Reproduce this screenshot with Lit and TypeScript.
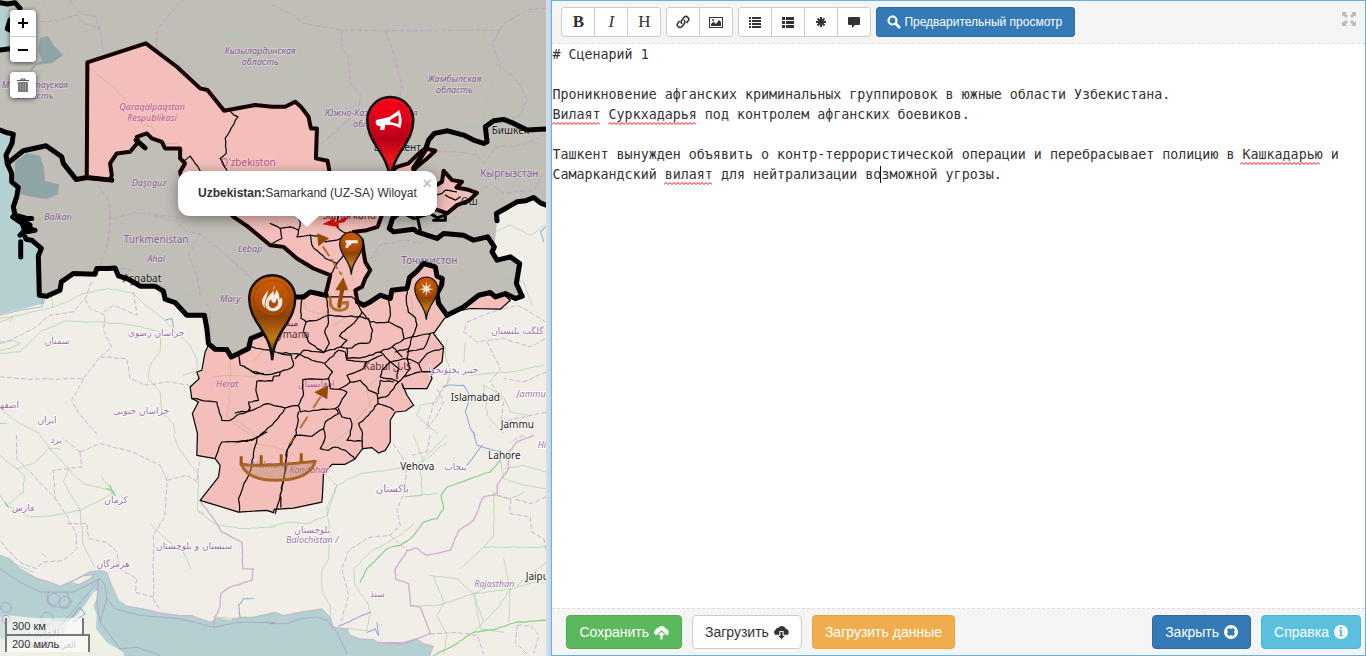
import { LitElement, html, svg, css } from "lit";
import { customElement, state } from "lit/decorators.js";

/* Map sheets: outlines are digitised at three units per pixel, each sheet with its own origin. */
const SHEETS: Record<string, [number, number]> = {
  a: [0, 0],
  b: [270, 0],
  c: [0, 215],
  d: [270, 215],
  e: [0, 435],
  f: [270, 435],
  g: [235, 340],
};

/* "a 10 20 30 40 b 5 6" -> list of strokes in map pixels; "/" or a line break lifts the pen. */
function strokes(source: string): [number, number][][] {
  let sheet = SHEETS.a;
  const all: [number, number][][] = [[]];
  const tokens = source.trim().replace(/\n/g, " / ").split(/[\s,]+/);
  for (let i = 0; i < tokens.length; i++) {
    const t = tokens[i];
    if (t === "/") all.push([]);
    else if (SHEETS[t]) sheet = SHEETS[t];
    else all[all.length - 1].push([sheet[0] + Number(t) / 3, sheet[1] + Number(tokens[++i]) / 3]);
  }
  return all.filter((s) => s.length > 1);
}

function trace(source: string, close = false): string {
  return strokes(source)
    .map((s) => "M" + s.map(([x, y]) => `${x.toFixed(1)} ${y.toFixed(1)}`).join("L") + (close ? "Z" : ""))
    .join("");
}

function meander(source: string, amount: number): string {
  let seed = 7;
  const noise = () => {
    seed = (seed * 16807) % 2147483647;
    return (seed / 2147483647 - 0.5) * 2 * amount;
  };
  return strokes(source)
    .map((s) => {
      let out = `M${s[0][0].toFixed(1)} ${s[0][1].toFixed(1)}`;
      for (let i = 1; i < s.length; i++) {
        const [x0, y0] = s[i - 1];
        const [x1, y1] = s[i];
        const steps = Math.max(1, Math.round(Math.hypot(x1 - x0, y1 - y0) / 4));
        for (let k = 1; k < steps; k++) {
          const x = x0 + ((x1 - x0) * k) / steps + noise();
          const y = y0 + ((y1 - y0) * k) / steps + noise();
          out += `L${x.toFixed(1)} ${y.toFixed(1)}`;
        }
        out += `L${x1.toFixed(1)} ${y1.toFixed(1)}`;
      }
      return out;
    })
    .join("");
}

const TURKMEN_SOUTH =
  "c 38 5 60 20 100 45 70 52 78 72 95 75 124 100 115 122 118 240 140 243 180 225 184 200 220 175 285 177 290 160 325 160 345 158 355 182 385 192 420 213 465 213 490 228 495 252 525 262 560 300 613 300 620 340 625 385 645 402 680 403 693 425 715 415 745 400 752 370 795 352 d 40 270 75 245 100 245 120 230 155 238 168 240";
const AMU_NORTH =
  "262 260 280 270 300 260 330 240 360 250 365 225 410 220 418 187 440 168 460 145 495 155 500 183 516 190 514 210 500 235 505 265 530 300 580 275 625 240 660 232 675 245 705 235 735 250 755 243";
const TAJIK_EAST =
  "755 243 738 205 748 145 720 125 680 135 665 110 672 95 652 65 610 75 580 60 520 55 500 70 440 50 430 42 370 50 357 40 367 10 385 -5";
const CASPIAN =
  "a 0 390 22 398 40 402 36 430 18 465 22 490 35 520 35 545 55 562 50 590 40 620 45 645 80 655 95 655 / c 62 80 62 125 / 60 5 75 50 105 45 / 45 0 90 30 60 60";
const KAZAKH_SOUTH =
  "b 430 505 465 450 475 420 492 400 532 392 580 405 610 420 640 430 650 425 645 380 670 362 700 358 730 370 770 390 828 387";
const CHINA_WEST = "b 840 620 810 608 790 592 765 602 740 605 705 625 678 640 680 662";

const UZBEK_EAST = "d 335 0 322 35 290 45 250 50 275 75 280 110 285 140 300 165 285 190 275 215 255 225 262 260";
const UZBEK_WEST =
  "d 165 240 172 215 180 180 130 160 80 130 40 95 0 90 c 740 32 700 5 a 690 640 545 540 540 515 555 490 540 475 540 445 495 445 485 425 455 415 440 400 410 410 415 425 390 455 350 460 330 490 335 525 330 540 260 532";
const UZBEK_NORTH =
  "a 260 532 262 187 437 130 530 200 600 265 622 270 672 332 765 315 815 320 b 45 320 75 305 92 320 115 350 122 385 140 385 137 475 172 482 178 515";
const UZBEK = `${UZBEK_NORTH} 360 515 380 500 415 490 440 465 465 445 495 455 470 475 440 500 430 530 400 640 ${UZBEK_EAST} 165 240 ${UZBEK_WEST}`;
const TASHKENT = "b 365 512 380 500 415 490 440 465 465 445 495 452 470 475 440 500 430 512";
const FERGHANA =
  "b 490 560 515 545 520 512 532 525 545 540 575 545 558 562 590 568 620 578 595 602 560 615 530 640 510 632 485 625";
const AFGHAN =
  "c 625 390 615 410 605 465 590 470 597 490 570 515 575 550 595 560 577 595 592 655 e 590 60 645 70 660 90 655 125 600 195 715 230 800 225 820 232 f 12 222 70 218 155 200 157 175 g 265 400 290 372 330 372 358 357 382 325 410 322 430 338 450 330 465 305 465 240 480 215 510 212 535 195 515 165 500 130 d 400 520 470 520 485 490 480 470 515 440 520 395 490 355 522 310 560 288 600 280 690 282 720 255 700 238 675 245 660 232 625 240 580 275 530 300 505 265 500 235 514 210 516 190 500 183 495 155 460 145 440 168 418 187 410 220 365 225 360 250 330 240 300 260 280 270 262 260 245 245 168 245 155 235 120 230 100 245 75 245 40 270 c 795 352 752 370 745 400 715 415 693 425 680 403 645 402";

const PROVINCES = meander(
  `a 692 335 713 350 675 415 678 460 660 475 680 510 / 545 485 570 468 600 512
 b 490 590 515 580 525 570 558 575 / 525 585 555 600 570 590
 d 0 90 35 70 30 40 0 25 / 30 40 60 35 85 45 80 65 120 60 155 65 165 80 200 75 240 50 / 80 0 90 20 85 45 / 120 60 125 90 165 130 200 145 180 180 / 200 145 220 120 240 95
 d 205 0 200 35 230 55 / 95 240 92 310 108 320 100 350 115 380 160 412 100 405 75 430
 d 168 245 175 320 163 350 177 385 160 412 / 108 320 140 315 175 300 205 302 265 305 275 290 262 262
 d 265 305 295 310 307 345 298 382 265 385 245 398 212 395 230 375 208 362 230 340 250 325 265 305
 d 275 290 300 320 330 322 355 320 360 290 355 250 / 355 320 395 340 400 372 425 365
 d 410 220 408 255 414 290 436 308 440 330 425 365 450 360 490 352 / 230 400 230 430 285 425 330 410 365 395 400 372 / 160 412 212 395
 d 425 365 415 400 410 430 360 440 330 410 / 365 395 395 425 / 410 410 460 400 480 355 / 445 445 470 415 518 398 / 410 430 445 445 455 470 480 470
 d 410 430 420 460 400 485 385 500 360 490 330 485 335 465 360 440 / 400 485 450 470
 d 360 440 385 460 380 490 / 415 400 375 410 / 90 415 75 430
 g 12 50 15 75 60 100 100 103 135 95 170 82 175 75 168 45 130 38 50 20
 g 0 218 45 212 40 185 70 180 62 150 65 122 112 122 115 108 133 106 135 95
 g 45 212 95 190 150 203 190 195 205 165 203 118 280 115 285 145 310 147 335 155 315 190 300 205 235 210 195 215 190 195
 g 130 38 185 40 230 60 268 70 292 95 280 115 / 268 70 310 30 330 35 335 60 395 65
 g 150 203 110 255 70 290 50 300 0 305 / 190 215 185 260 180 290 155 330 150 380 140 450 120 520
 g 185 285 230 288 265 265 270 245 310 220 300 205
 g 265 265 270 290 255 325 280 330 300 320 330 330 355 350 358 357
 g 310 205 320 230 345 235 350 250 345 285 335 300 380 302
 g 310 147 345 125 375 120 400 150 425 160 428 190 400 225 370 250 382 280 382 325
 g 428 190 460 200 475 210 / 428 175 460 165 490 125 / 345 125 335 105 385 85 395 65 440 45 / 430 160 435 120 475 125
 c 715 420 720 450 760 470 790 475 / 575 550 650 560 665 615 690 615 710 600 740 590 750 575
 e 645 70 665 20 740 18 770 5 800 -10 / 770 10 755 90 715 190 718 228
 f 75 0 50 50 45 110 30 180 32 215`,
  0.7,
);

const ROADS_GREEN = meander(
  `a 128 0 150 55 180 110 205 155 260 195 370 290 390 320 450 380 490 430 550 460 / 205 155 200 180 120 230 60 250 0 280
 a 640 0 645 0 665 40 685 105 740 110 795 115 815 140
 b 0 180 50 205 110 210 160 240 210 270 250 325 / 745 0 680 35 650 75 640 115 655 160 680 190 700 230 770 255 828 280 / 680 190 665 240 650 290 645 330 630 380 520 385 440 415 / 828 345 760 350 650 380 / 828 400 780 430 720 440 690 420 650 450 600 480 560 520 555 545 / 700 440 740 490 800 510 828 540
 c 110 0 135 30 170 75 220 70 300 105 370 155 400 175 480 220 520 245 570 238 610 250 640 230 690 215 720 180 750 130 780 70 825 20
 c 0 310 60 300 120 285 160 275 200 260 250 235 325 220 400 235 430 265 490 310 520 345 570 390 590 430 590 465 550 480 / 0 415 60 410 120 350 195 318 300 320 400 330 480 350 480 410 450 450 445 490 480 530 485 590 520 625 525 655 / 0 320 40 305 30 320 / 0 385 40 375 60 385 30 400 0 405 / 0 580 60 625 120 655 / 155 235 158 275 / 0 625 20 625
 d 585 380 580 440 / 525 420 540 470 530 510 / 530 370 525 420 / 600 480 720 470 820 450 / 670 120 700 190 760 200 785 270 / 650 60 720 30 780 60 825 30 / 640 510 650 600 700 655 / 520 510 500 560 450 570 440 600 500 655 / 640 510 700 545 720 590 770 600
 e 120 0 148 38 205 100 250 145 330 165 345 180 / 148 38 100 85 50 100 0 60 / 50 100 72 120 70 170 20 210 0 180 / 20 210 90 245 160 240 240 225 320 185 345 165 / 148 38 180 42 / 205 100 190 140 240 225 250 330 285 395 / 305 125 335 165 / 520 0 540 45 595 120 592 225 650 270 735 280 825 275 / 592 225 610 235 / 450 265 490 305 550 350 570 400 / 125 355 140 365 / 30 380 100 410 / 640 545 720 548 825 540
 f 0 275 50 260 110 265 170 240 200 150 270 115 350 105 450 85 530 20 / 165 115 200 150 170 215 180 300 175 370 155 405 155 470 180 510 180 560 / 530 0 450 80 455 180 405 185 500 175 / 430 265 390 300 300 350 250 400 255 450 290 500 300 530 290 585 230 580 / 480 420 560 430 610 475 720 460 828 430 / 570 400 640 335 828 335 / 670 170 670 300 640 335 / 690 75 700 130 760 150 828 160 / 700 100 760 90 828 110 / 720 460 680 520 610 590 / 420 512 500 510 610 475 640 560 / 700 370 720 460 715 560 / 610 475 630 580 700 590 / 490 425 520 500 500 540 530 600 520 655 / 828 380 780 420 740 450 / 650 455 610 475 / 670 180 720 190 760 170 / 430 0 460 80`,
  0.5,
);
const ROADS_STRONG = meander(
  `f 490 660 550 630 610 590 680 580 740 560 828 555 / 690 75 660 110 600 130 530 155 512 180 520 220 500 250 460 260 430 300 390 330 350 340 290 400 270 440
 e 330 150 345 180 335 165 320 160 / 15 200 25 215`,
  0.6,
);
const PROVINCIAL = meander(
  `a 210 0 240 40 285 50 300 90 310 155 / 120 65 180 60 230 45 250 70 300 85 / 470 145 470 90 510 40 550 0 / 520 180 570 215 612 255 / 295 555 325 600 335 655 / 340 655 400 638 460 640 540 655
 b 5 15 60 40 100 70 215 90 340 92 480 92 690 90 / 215 90 215 150 235 165 240 250 270 285 265 330 200 390 150 435 / 345 92 370 160 395 260 385 300 / 828 25 770 30 700 70 665 130 690 200 740 240 770 300 750 345 700 370 / 500 455 560 455 620 465 640 490 680 440 760 435 828 400 / 820 520 790 570 700 580 660 550 620 580 600 560
 c 330 0 325 80 300 150 / 275 200 255 250 220 290 150 300 100 340 30 375 0 380 / 300 150 400 165 / 460 0 530 20 560 50 600 55 700 140 760 195 825 230 / 600 55 565 120 590 180 600 240 630 280 630 360 / 0 485 80 492 250 490 300 425 335 395 310 345 315 300 270 280 255 250 / 250 490 215 555 240 600 290 655 / 300 425 380 430 390 490 440 510 500 500 570 510 / 310 290 340 270 410 300 400 230
 d 300 130 330 90 400 75 450 85 520 30 560 0 / 700 280 740 270 770 285 825 320 / 700 280 640 300 590 320 580 350 620 380 700 370 780 395 828 370 / 650 380 690 460 660 500 700 560 690 620 828 590 / 828 470 760 500 700 490 / 540 490 490 560 470 640 500 600 520 560 500 520
 e 50 0 50 70 100 120 165 190 200 240 230 300 230 340 190 375 130 380 110 400 60 380 20 340 0 315 / 240 50 300 25 400 50 480 90 500 135 495 240 460 300 460 360 460 490 480 525 / 200 265 260 265 265 310 320 320 350 350 360 400 410 430 405 470 460 485 / 500 135 560 120 590 140 600 70 / 240 50 245 95 160 105 165 190 / 240 50 190 10
 f 370 25 410 90 400 180 380 220 390 270 360 300 300 305 235 345 215 400 235 480 210 570 / 360 300 410 345 / 480 0 470 50 420 60 / 680 180 720 190 720 235 780 245 785 290 820 310 828 350 / 480 595 560 590 620 600 640 655 / 760 0 720 20 / 828 185 780 205 730 190 / 740 570 735 620 770 655 / 740 570 780 570 805 600 790 655`,
  0.4,
);
const NATIONAL = meander(
  `e 600 195 640 250 665 290 725 320 728 400 760 400 755 435 690 455 662 475 660 510 645 545 640 575
 f 790 0 740 20 715 50 715 100 680 150 680 175 640 185 610 255 565 285 540 345 470 360 440 338 410 345 375 400 375 430 415 445 420 510 450 515 480 595 440 610 400 625 325 620`,
  0.5,
);
const MARITIME = trace(`e 0 400 60 440 120 470 220 470 300 430 315 450 320 490 345 520 420 540 540 550 640 575 720 560 825 562 f 0 565 50 565 90 550 140 545 170 555 200 590 230 655
 e 300 430 250 490 190 560 160 590 / 145 470 140 500 160 515 200 515 210 495 200 470 / 295 440 290 500 300 560 360 640 / 320 490 300 560 / 360 640 410 635 480 660
 c 128 240 125 275 60 285 0 300`);
const RIVERS = meander(
  `f 610 -10 620 30 690 50 / 635 30 590 90 / 205 572 300 530 / 290 590 315 580 325 600 320 560
 d 520 515 530 510 580 510 600 545 585 590 600 640 615 660 / 825 35 810 50 820 80
 c 495 315 515 310 520 335
 e 215 545 240 515 255 535 220 560 / 760 488 730 490 715 510 720 545`,
  0.4,
);
const PINK_ROADS = meander(
  `a 260 195 370 290 390 320 / 430 375 455 380 490 430 530 430 560 465
 c 640 485 690 480 760 485 825 460 / 690 440 690 540 680 600 720 640 750 655 / 760 440 790 400
 d 100 260 110 285 150 295 200 285 / 190 330 220 310 / 300 570 290 520 340 470 / 420 240 430 300 / 240 160 250 190 220 230
 g 0 240 50 270 60 310 120 320 180 345 / 260 330 330 280 400 200 430 140`,
  0.5,
);

const COAST_SOUTH = trace(
  `e 0 360 30 370 60 400 110 428 150 440 180 452 220 435 270 408 300 405 320 410 335 450 355 495 380 512 430 520 480 532 540 540 575 540 630 560 650 548 690 555 720 545 760 545 825 530 f 40 540 90 530 155 520 180 545 190 575 230 580 240 600 270 610 310 612 330 625 400 620 440 610 460 625 490 632 480 655 480 700 e -10 700`,
  true,
);
const GULF_LAND = trace(
  `e 0 545 30 540 80 545 130 550 200 560 230 540 260 500 280 470 292 465 290 490 280 510 290 540 288 580 320 620 370 650 380 700 -10 700`,
  true,
);
const GULF_WATER = trace(`e 0 545 130 550 200 560 190 600 150 610 60 615 0 610`, true);
const QESHM = trace(`e 212 440 250 422 280 418 270 430 235 448`, true);

const GREY_LAND = trace(
  `a 0 0 1638 0 1638 366 b 840 620 810 608 790 592 765 602 740 605 705 625 678 640 680 662 d 672 95 665 110 680 135 720 125 748 145 738 205 755 243 735 250 705 235 675 245 530 300 460 300 262 262 168 240 40 270 c 795 352 745 400 715 415 693 425 645 402 625 385 613 300 560 300 525 262 495 252 465 213 420 213 355 182 345 158 290 160 285 177 220 175 184 200 180 225 140 243 118 240 115 122 124 100 60 20 a 45 645 40 620 55 562 35 520 22 490 18 465 36 430 40 402 0 390`,
  true,
);

interface Label {
  x: number;
  y: number;
  text: string;
  kind: string;
}

const LABELS: Label[] = [
  { x: 260, y: 54, text: "Кызылординская", kind: "region" },
  { x: 260, y: 65, text: "область", kind: "region" },
  { x: 454, y: 82, text: "Жамбылская", kind: "region" },
  { x: 454, y: 93, text: "область", kind: "region" },
  { x: 371, y: 116, text: "Южно-Казахстанская", kind: "region" },
  { x: 371, y: 127, text: "область", kind: "region" },
  { x: 35, y: 88, text: "Мангистауская", kind: "region" },
  { x: 35, y: 99, text: "область", kind: "region" },
  { x: 152, y: 110, text: "Qaraqalpaqstan", kind: "region pinked" },
  { x: 152, y: 121, text: "Respublikasi", kind: "region pinked" },
  { x: 248, y: 166, text: "O'zbekiston", kind: "country pinked" },
  { x: 149, y: 186, text: "Daşoguz", kind: "region" },
  { x: 58, y: 220, text: "Balkan", kind: "region" },
  { x: 156, y: 243, text: "Türkmenistan", kind: "country" },
  { x: 156, y: 262, text: "Ahal", kind: "region" },
  { x: 250, y: 252, text: "Lebap", kind: "region" },
  { x: 230, y: 302, text: "Mary", kind: "region" },
  { x: 509, y: 177, text: "Кыргызстан", kind: "country" },
  { x: 429, y: 264, text: "Точикистон", kind: "country" },
  { x: 227, y: 387, text: "Herat", kind: "region pinked" },
  { x: 270, y: 468, text: "Helmand", kind: "region pinked" },
  { x: 309, y: 473, text: "Kandahar", kind: "region pinked" },
  { x: 316, y: 387, text: "افغانستان", kind: "arabic pinked" },
  { x: 156, y: 336, text: "خراسان رضوی", kind: "arabic" },
  { x: 57, y: 344, text: "سمنان", kind: "arabic" },
  { x: 141, y: 414, text: "خراسان جنوبی", kind: "arabic" },
  { x: 47, y: 423, text: "ایران", kind: "arabic" },
  { x: 5, y: 408, text: "اصفهان", kind: "arabic" },
  { x: 56, y: 443, text: "یزد", kind: "arabic" },
  { x: 116, y: 503, text: "کرمان", kind: "arabic" },
  { x: 23, y: 511, text: "فارس", kind: "arabic" },
  { x: 194, y: 549, text: "سیستان و بلوچستان", kind: "arabic" },
  { x: 113, y: 567, text: "هرمزگان", kind: "arabic" },
  { x: 44, y: 635, text: "الإمارات", kind: "arabic" },
  { x: 48, y: 648, text: "العربية المتحدة", kind: "arabic" },
  { x: 517, y: 334, text: "گلگت بلتستان", kind: "arabic" },
  { x: 453, y: 373, text: "خیبر پختونخوا", kind: "arabic" },
  { x: 455, y: 470, text: "پنجاب", kind: "arabic" },
  { x: 392, y: 492, text: "پاکستان", kind: "country arabic" },
  { x: 312, y: 533, text: "بلوچستان", kind: "arabic" },
  { x: 312, y: 543, text: "Balochistan /", kind: "region" },
  { x: 377, y: 597, text: "سنڌ", kind: "arabic" },
  { x: 494, y: 587, text: "Rajasthan", kind: "region" },
  { x: 531, y: 397, text: "Jammu", kind: "region" },
  { x: 550, y: 448, text: "Himac", kind: "region" },
  { x: 510, y: 134, text: "Бишкек", kind: "city" },
  { x: 397, y: 151, text: "Шымкент", kind: "city" },
  { x: 469, y: 205, text: "Ош", kind: "city" },
  { x: 142, y: 282, text: "Aşgabat", kind: "city" },
  { x: 286, y: 338, text: "Maymana", kind: "city pale" },
  { x: 288, y: 326, text: "میمنه", kind: "arabic pale" },
  { x: 387, y: 370, text: "Kabul کابل", kind: "city pale" },
  { x: 475, y: 401, text: "Islamabad", kind: "city" },
  { x: 517, y: 428, text: "Jammu", kind: "city" },
  { x: 504, y: 459, text: "Lahore", kind: "city" },
  { x: 417, y: 470, text: "Vehova", kind: "city" },
  { x: 539, y: 580, text: "Jaipur", kind: "city" },
  { x: 349, y: 219, text: "Samarkand", kind: "city pale" },
];

const PIN = "M0 63C-2 32-23 26-23 1A23 23 0 1 1 23 1C23 26 2 32 0 63Z";

const GLYPHS = {
  horn: svg`<path d="M-14 1Q-16 5-12 7L-10 7-10 11-6 11-5 6 2 6Q6 7 10 9Q13 1 9-9Q5-6-1-2ZM0 1Q5-2 8-4 9 2 8 5 4 4 0 3Z" fill="#fff" fill-rule="evenodd"/>`,
  fire: svg`<path d="M2-12C4-6-4-3-6 3-9 10-4 14 1 14 8 14 11 8 10 2 9 0 8 1 7 3 8-2 6-5 4-8 4-4 2-4 2-1 1-7 1-8 2-12ZM0 11C-5 9-4 4-1 2-1 4 0 5 2 6 4 5 4 2 5 1 7 6 6 10 0 11Z" fill="#f0e9e4" fill-rule="evenodd"/><path d="M-4-7C-8-2-11 2-10 6-9 9-8 10-7 11-9 5-5 1-4-7Z" fill="#f0e9e4"/>`,
  gun: svg`<path d="M-12-4L-10-6H13V0H1L-1 4H-4L-6 9H-12L-9-1-12-2Z" fill="#f5eee9"/>`,
  leaf: svg`<path d="M0-14L2-3 10-10 5 0 15 2 5 4 8 10 1 6V14H-1V6L-8 10-5 4-15 2-5 0-10-10-2-3Z" fill="#f0e2d5"/>`,
};

const MAP_PINS = [
  { x: 272, y: 297, size: 1, tone: "orange", glyph: GLYPHS.fire },
  { x: 390, y: 119, size: 1, tone: "red", glyph: GLYPHS.horn },
  { x: 351, y: 243, size: 0.5, tone: "orange", glyph: GLYPHS.gun },
  { x: 426, y: 288, size: 0.5, tone: "orange", glyph: GLYPHS.leaf },
];

@customElement("scenario-map")
class ScenarioMap extends LitElement {
  @state() private popupOpen = true;

  static styles = css`
    :host {
      display: block;
      position: relative;
      overflow: hidden;
      background: #f1eee8;
      font-family: "Liberation Sans", Arial, sans-serif;
    }
    .chart {
      display: block;
      width: 100%;
      height: 100%;
    }
    .line {
      fill: none;
      stroke-linejoin: round;
      stroke-linecap: round;
    }
    .dash {
      stroke-linecap: butt;
      stroke-dasharray: 5 2;
    }
    .label {
      text-anchor: middle;
      paint-order: stroke;
      stroke: rgba(255, 255, 255, 0.8);
      stroke-width: 2px;
      stroke-linejoin: round;
      font-family: "Noto Sans", "DejaVu Sans", sans-serif;
      font-size: 9px;
      fill: #a070a4;
    }
    .under {
      stroke: rgba(222, 214, 222, 0.6);
      fill: #84648c;
    }
    .region {
      font-style: italic;
    }
    .country {
      font-size: 10px;
    }
    .arabic {
      font-family: "DejaVu Sans", sans-serif;
    }
    .pinked {
      fill: #b5588a;
      stroke: rgba(250, 205, 205, 0.8);
    }
    .city {
      font-size: 10px;
      fill: #222;
    }
    .north {
      stroke: rgba(205, 202, 198, 0.8);
    }
    .pale {
      fill: #5a2c34;
      stroke: none;
    }
    .controls {
      position: absolute;
      left: 10px;
      top: 10px;
      display: grid;
      gap: 10px;
    }
    .bar {
      display: grid;
      border-radius: 4px;
      box-shadow: 0 1px 5px rgba(0, 0, 0, 0.65);
      overflow: hidden;
    }
    .bar button {
      display: grid;
      place-items: center;
      width: 26px;
      height: 26px;
      padding: 0;
      border: 0;
      background: #fff;
      color: #000;
      cursor: pointer;
    }
    .bar button + button {
      border-top: 1px solid #ccc;
    }
    .scale {
      position: absolute;
      left: 5px;
      bottom: 4px;
      display: grid;
      justify-items: start;
      font-size: 11px;
      line-height: 16px;
      color: #333;
    }
    .rule {
      box-sizing: border-box;
      padding: 0 5px;
      border: 2px solid #777;
      background: rgba(255, 255, 255, 0.5);
    }
    .km {
      width: 79px;
      border-top: 0;
    }
    .miles {
      width: 85px;
      margin-top: -2px;
      border-bottom: 0;
    }
    .popup {
      position: absolute;
      left: 178px;
      top: 171px;
      display: flex;
      padding: 0 20px;
      border-radius: 12px;
      background: #fff;
      box-shadow: 0 3px 14px rgba(0, 0, 0, 0.4);
      font-size: 12px;
      line-height: 45px;
      color: #333;
      white-space: nowrap;
    }
    .popup::after {
      content: "";
      position: absolute;
      left: 50%;
      top: 100%;
      margin-left: -12px;
      border: 12px solid transparent;
      border-top: 11px solid #fff;
      border-bottom: 0;
    }
    .close {
      position: absolute;
      right: 5px;
      top: 4px;
      padding: 0;
      border: 0;
      background: none;
      font: bold 16px/18px "Liberation Sans", Arial, sans-serif;
      color: #c3c3c3;
      cursor: pointer;
    }
  `;

  private pin(p: (typeof MAP_PINS)[number]) {
    return svg`<g transform="translate(${p.x} ${p.y}) scale(${p.size})">
      <path d=${PIN} fill="url(#${p.tone})" stroke="#111" stroke-width="2.500"></path>
      <circle r="18" cy="1" fill="url(#${p.tone}-cap)" stroke="#000" stroke-opacity=".15"></circle>
      ${p.glyph}
    </g>`;
  }

  render() {
    return html`
      <svg class="chart" viewBox="0 0 546 656" preserveAspectRatio="xMinYMin slice" role="img" aria-label="Карта">
        <defs>
          <linearGradient id="orange" x2="0" y2="1">
            <stop offset="0" stop-color="#d65c00" /><stop offset=".5" stop-color="#8f4206" />
            <stop offset=".75" stop-color="#c47a12" /><stop offset="1" stop-color="#1c0e00" />
          </linearGradient>
          <linearGradient id="orange-cap" x2="0" y2="1">
            <stop offset="0" stop-color="#c85a06" /><stop offset="1" stop-color="#a44806" />
          </linearGradient>
          <linearGradient id="red" x2="0" y2="1">
            <stop offset="0" stop-color="#ff0a1c" /><stop offset=".5" stop-color="#b80018" />
            <stop offset=".75" stop-color="#f01818" /><stop offset="1" stop-color="#a00010" />
          </linearGradient>
          <linearGradient id="red-cap" x2="0" y2="1">
            <stop offset="0" stop-color="#f80018" /><stop offset="1" stop-color="#c4001c" />
          </linearGradient>
        </defs>
        <rect width="546" height="656" fill="#f1eee8" />
        <path d="M0 0H45V303L0 314Z" fill="#b5d0d0" />
        <path d=${COAST_SOUTH} fill="#b5d0d0" />
        <path d=${GULF_LAND} fill="#eef0e6" />
        <path d=${GULF_WATER} fill="#b5d0d0" opacity=".5" />
        <path d=${QESHM} fill="#f1eee8" stroke="#b99fc9" stroke-width=".6" />
        <path d=${GREY_LAND} fill="#c1bdb7" />
        <path d="M0 6Q10 4 10 20V48L0 50Z" fill="#b5d0d0" />
        <path d="M30 72Q32 64 42 61L38 50 40 38 48 36 54 46 63 55 52 63 36 65Z" fill="#8fa5a5" />
        <path d="M15 162L27 153 40 156 44 168 45 181 59 184 58 194 46 199 29 196 18 193 15 180Z" fill="#8fa5a5" />
        <path class="line" d=${COAST_SOUTH} stroke="#b99fc9" stroke-width=".6" />
        <g class="line" stroke="#a890c4" stroke-width=".8" opacity=".8">
          <path d=${MARITIME} />
          <circle cx="6" cy="607" r="5" /><circle cx="47" cy="618" r="6" /><circle cx="54" cy="599" r="6" />
          <circle cx="65" cy="602" r="6" /><circle cx="6" cy="619" r="4" />
        </g>
        <path class="line" d=${RIVERS} stroke="#8fa9d2" stroke-width="1" />
        <path class="line dash" d=${PROVINCIAL} stroke="#c08fc6" stroke-width=".9" opacity=".7" />
        <path class="line" d=${NATIONAL} stroke="#cf9fd0" stroke-width="1.4" opacity=".8" />
        <path class="line" d=${ROADS_GREEN} stroke="#9fd09c" stroke-width=".8" opacity=".8" />
        <path class="line" d=${ROADS_STRONG} stroke="#86d18a" stroke-width="1.2" />

        <path d=${trace(UZBEK, true)} fill="#f4bfbb" />
        <path d=${trace(FERGHANA, true)} fill="#f4bfbb" />
        <path d=${trace(AFGHAN, true)} fill="#f4bfbb" stroke="#000" stroke-width="1.2" stroke-linejoin="round" />
        <path class="line" d=${PINK_ROADS} stroke="#c9b48f" stroke-width=".9" opacity=".8" />

        ${LABELS.map((l) => {
          const north = l.y < 310 && !/pinked|pale/.test(l.kind);
          const tone = north ? (l.kind === "city" ? " north" : " under") : "";
          return svg`<text class="label ${l.kind}${tone}" x=${l.x} y=${l.y}>${l.text}</text>`;
        })}

        <path class="line" d=${PROVINCES} stroke="#000" stroke-width="1.2" />
        <g class="line" stroke="#000" stroke-width="5">
          <path d=${trace(TURKMEN_SOUTH)} />
          <path d=${trace("d " + AMU_NORTH)} />
          <path d=${trace("d " + TAJIK_EAST)} />
          <path d=${trace(CASPIAN)} />
          <path d=${trace("a 22 490 70 452 138 437 185 470 190 490 228 538 260 532 335 540 / 408 420 435 443")} />
          <path d=${trace("a 0 150 30 146 / 30 60 22 86 30 90 / 0 8 22 12 45 8 60 25")} />
          <path d=${trace(KAZAKH_SOUTH)} />
          <path d=${trace(CHINA_WEST)} />
          <path d=${trace("d 400 -5 430 10 480 -5 500 8 525 0 525 15 490 15 / 440 0 450 45")} stroke-width="3" />
        </g>
        <g class="line" stroke="#150000" stroke-width="4">
          <path d=${trace(UZBEK_NORTH)} />
          <path d=${trace(UZBEK_WEST)} />
          <path d=${trace(UZBEK_EAST)} />
          <path d=${trace(TASHKENT)} />
          <path d=${trace(FERGHANA)} />
        </g>

        <path d="M322 224L336 217 334 222 350 215 344 222 338 223 339 227Z" fill="#e80c0c" />
        <g fill="#964a00">
          <path d="M317 233L329 238 318 246Z" />
          <path d="M343 277L335 290 348 290Z" />
          <path d="M314 392L328 385 327 399Z" />
        </g>
        <g class="line" stroke="#a3601c" stroke-width="2" stroke-linecap="butt">
          <path d="M323 247L341 274" stroke-dasharray="10 5" opacity=".8" />
          <path d="M320 397L290 443" stroke-dasharray="12 12" opacity=".8" />
          <path d="M342 289L339 306" stroke-width="4" stroke="#964a00" />
          <path d="M330 297Q329 310 339 310T347 302M330 297V305M347 302L341 303" stroke-width="3" opacity=".85" />
        </g>
        <path d="M241 464Q262 467 315 461Q311 475 290 479Q250 484 241 464Z" fill="#b98a6a" fill-opacity=".45" stroke="#a9642a" stroke-width="3" stroke-linejoin="round" />
        <path d="M241 456V464M261 455V464M281 454V463M301 453V462" stroke="#a0520f" stroke-width="3" />
        ${MAP_PINS.map((p) => this.pin(p))}
      </svg>

      ${this.popupOpen
        ? html`<div class="popup" role="dialog" aria-label="Регион">
            <strong>Uzbekistan:</strong><span>Samarkand (UZ-SA) Wiloyat</span>
            <button class="close" type="button" aria-label="Закрыть окно" @click=${() => (this.popupOpen = false)}>×</button>
          </div>`
        : null}

      <div class="controls">
        <div class="bar">
          <button type="button" aria-label="Приблизить">
            <svg width="12" height="12"><path d="M1 6H11M6 1V11" stroke="#000" stroke-width="2" /></svg>
          </button>
          <button type="button" aria-label="Отдалить">
            <svg width="12" height="12"><path d="M1 6H11" stroke="#000" stroke-width="2" /></svg>
          </button>
        </div>
        <div class="bar">
          <button type="button" aria-label="Удалить">
            <svg width="12" height="14">
              <path d="M4 2V1H8V2M0 2.500H12" fill="none" stroke="#555" />
              <path d="M1 4H11V14H1Z" fill="#777" />
              <path d="M3.500 5V13M6 5V13M8.500 5V13" stroke="#999" />
            </svg>
          </button>
        </div>
      </div>

      <div class="scale">
        <div class="rule km">300 км</div>
        <div class="rule miles">200 миль</div>
      </div>
    `;
  }
}

/* Toolbar and footer pictograms share a 14-unit grid. */
const CLOUD = "M3.500 10A3 3 0 0 1 1.500 4.500 2.500 2.500 0 0 1 4 2.500 4 4 0 0 1 11 3.500 3.300 3.300 0 0 1 11 10Z";
const ICONS = {
  link: svg`<g fill="none" stroke="currentColor" stroke-width="1.600"><path d="M6 9A3 3 0 0 1 6 5L8 2.500A2.500 2.500 0 0 1 12 6L10.500 8"/><path d="M8 5A3 3 0 0 1 8 9L6 11.500A2.500 2.500 0 0 1 2 8L3.500 6"/></g>`,
  picture: svg`<path fill-rule="evenodd" d="M0 2H14V13H0ZM1 3V12H13V3Z M2 11V9L4.500 6.500 7 9 10 5 12 7V11Z"/><circle cx="4" cy="5" r="1"/>`,
  list: svg`<path d="M1 2H3V4H1ZM4 2H13V4H4ZM1 5H3V7H1ZM4 5H13V7H4ZM1 8H3V10H1ZM4 8H13V10H4ZM1 11H3V13H1ZM4 11H13V13H4Z"/>`,
  thlist: svg`<path d="M1 2H4V5H1ZM5 2H13V5H5ZM1 6H4V9H1ZM5 6H13V9H5ZM1 10H4V13H1ZM5 10H13V13H5Z"/>`,
  asterisk: svg`<path d="M7 2V12M2 7H12M3.500 3.500L10.500 10.500M10.500 3.500L3.500 10.500" stroke="currentColor" stroke-width="2"/>`,
  comment: svg`<path d="M2 2H12A1 1 0 0 1 13 3V9A1 1 0 0 1 12 10H8L5 13V10H2A1 1 0 0 1 1 9V3A1 1 0 0 1 2 2Z"/>`,
  search: svg`<circle cx="5.500" cy="5.500" r="4" fill="none" stroke="currentColor" stroke-width="2.200"/><path d="M8.500 8.500L13 13" stroke="currentColor" stroke-width="2.800"/>`,
  full: svg`<path d="M0 0H5L3.500 1.500 6 4 4 6 1.500 3.500 0 5ZM14 0V5L12.500 3.500 10 6 8 4 10.500 1.500 9 0ZM0 14V9L1.500 10.500 4 8 6 10 3.500 12.500 5 14ZM14 14H9L10.500 12.500 8 10 10 8 12.500 10.500 14 9Z"/>`,
  upload: svg`<path d=${CLOUD}/><path class="cut" d="M7 5.500L11.500 10H8.500V14H5.500V10H2.500Z"/>`,
  download: svg`<path d=${CLOUD}/><path class="cut" d="M5.500 6H8.500V9.500H11.500L7 14 2.500 9.500H5.500Z"/>`,
  close: svg`<path fill-rule="evenodd" d="M7 0A7 7 0 1 1 7 14 7 7 0 0 1 7 0ZM5 3L3 5 4 7 3 9 5 11 7 10 9 11 11 9 10 7 11 5 9 3 7 4Z"/>`,
  info: svg`<path fill-rule="evenodd" d="M7 0A7 7 0 1 1 7 14 7 7 0 0 1 7 0ZM6 2V4H8V2ZM5 5V6H6V10H5V11H9V10H8V5Z"/>`,
};

const icon = (name: keyof typeof ICONS, size = 14) =>
  html`<svg class="icon" width=${size} height=${size} viewBox="0 0 14 14" fill="currentColor" aria-hidden="true">${ICONS[name]}</svg>`;

const TEXT = `# Сценарий 1

Проникновение афганских криминальных группировок в южные области Узбекистана.
Вилаят Суркхадарья под контролем афганских боевиков.

Ташкент вынужден объявить о контр-террористической операции и перебрасывает полицию в Кашкадарью и Самаркандский вилаят для нейтрализации возможной угрозы.`;

/* Spelling marks and the caret, by text row, column and length. */
const MISSPELLED = [
  { row: 3, col: 0, len: 6 },
  { row: 3, col: 7, len: 11 },
  { row: 5, col: 86, len: 10 },
  { row: 6, col: 14, len: 6 },
];
const CARET = { row: 6, col: 41 };
const COLUMN = 8;
const ROW = 20;

@customElement("scenario-editor")
class ScenarioEditor extends LitElement {
  static styles = css`
    :host {
      display: flex;
      flex-direction: column;
      box-sizing: border-box;
      min-width: 0;
      border: 1px solid #66afe9;
      background: #fff;
      font-family: "Liberation Sans", Arial, sans-serif;
      color: #333;
    }
    .head {
      display: flex;
      align-items: flex-start;
      gap: 5px;
      padding: 6px 9px;
      border-bottom: 1px dashed #ddd;
      background: #f5f5f5;
    }
    .group {
      display: flex;
    }
    button {
      --face: #fff;
      display: inline-flex;
      align-items: center;
      justify-content: center;
      box-sizing: border-box;
      border: 1px solid #ccc;
      border-radius: 4px;
      background: var(--face);
      color: #333;
      font: 14px/20px "Liberation Sans", Arial, sans-serif;
      white-space: nowrap;
      cursor: pointer;
    }
    .tool {
      width: 34px;
      height: 30px;
      padding: 0;
      border-radius: 0;
    }
    .tool + .tool {
      margin-left: -1px;
    }
    .tool:first-child {
      border-radius: 3px 0 0 3px;
    }
    .tool:last-child {
      border-radius: 0 3px 3px 0;
    }
    .serif {
      font-family: "Liberation Serif", "Times New Roman", serif;
      font-size: 17px;
    }
    .bold {
      font-weight: bold;
    }
    .italic {
      font-style: italic;
    }
    .preview {
      gap: 3px;
      height: 30px;
      padding: 0 12px 0 10px;
      border-radius: 3px;
      font-size: 12px;
    }
    .expand {
      margin: 5px 0 0 auto;
      padding: 0;
      border: 0;
      background: none;
      color: #bbb;
    }
    .icon {
      flex: none;
      display: block;
    }
    .cut {
      stroke: var(--face);
      stroke-width: 1px;
    }
    .body {
      position: relative;
      flex: 1;
      display: grid;
      min-height: 0;
    }
    .text {
      box-sizing: border-box;
      width: 100%;
      padding: 1px 0 0;
      border: 0;
      outline: 0;
      resize: none;
      background: #fff;
      color: #333;
      font-family: "DejaVu Sans Mono", "Liberation Mono", monospace;
      line-height: 20px;
      overflow: hidden;
    }
    .wave,
    .caret {
      position: absolute;
      pointer-events: none;
    }
    .wave {
      height: 3px;
      overflow: hidden;
    }
    .caret {
      width: 1px;
      height: 17px;
      background: #000;
    }
    .foot {
      display: flex;
      gap: 10px;
      padding: 6px 4px 6px 14px;
      border-top: 1px dashed #ddd;
      background: #f5f5f5;
    }
    .foot button {
      gap: 5px;
      height: 34px;
      padding: 0 12px;
    }
    .primary {
      --face: #337ab7;
      border-color: #2e6da4;
      color: #fff;
    }
    .success {
      --face: #5cb85c;
      border-color: #4cae4c;
      color: #fff;
    }
    .warning {
      --face: #f0ad4e;
      border-color: #eea236;
      color: #fff;
    }
    .info {
      --face: #5bc0de;
      border-color: #46b8da;
      color: #fff;
    }
    .push {
      margin-left: auto;
    }
  `;

  render() {
    return html`
      <div class="head">
        <div class="group">
          <button class="tool serif bold" type="button" title="Жирный">B</button>
          <button class="tool serif italic" type="button" title="Курсив">I</button>
          <button class="tool serif" type="button" title="Заголовок">H</button>
        </div>
        <div class="group">
          <button class="tool" type="button" title="Ссылка">${icon("link")}</button>
          <button class="tool" type="button" title="Изображение">${icon("picture")}</button>
        </div>
        <div class="group">
          <button class="tool" type="button" title="Список">${icon("list")}</button>
          <button class="tool" type="button" title="Нумерованный список">${icon("thlist")}</button>
          <button class="tool" type="button" title="Код">${icon("asterisk")}</button>
          <button class="tool" type="button" title="Цитата">${icon("comment")}</button>
        </div>
        <button class="preview primary" type="button">${icon("search")}Предварительный просмотр</button>
        <button class="expand" type="button" aria-label="Во весь экран">${icon("full")}</button>
      </div>
      <div class="body">
        <textarea class="text" aria-label="Текст сценария" spellcheck="false" .value=${TEXT}></textarea>
        ${MISSPELLED.map(
          (m) => html`<svg
            class="wave"
            style="left:${m.col * COLUMN}px;top:${m.row * ROW + 18}px;width:${m.len * COLUMN}px"
            aria-hidden="true"
          >
            <path d=${"M0 2.500" + "l2-2 2 2".repeat(m.len * 2)} fill="none" stroke="#f00" />
          </svg>`,
        )}
        <div class="caret" style="left:${CARET.col * COLUMN}px;top:${CARET.row * ROW + 2}px"></div>
      </div>
      <div class="foot">
        <button class="success" type="button">Сохранить ${icon("upload", 15)}</button>
        <button type="button">Загрузить ${icon("download", 15)}</button>
        <button class="warning" type="button">Загрузить данные</button>
        <button class="primary push" type="button">Закрыть ${icon("close")}</button>
        <button class="info" type="button">Справка ${icon("info")}</button>
      </div>
    `;
  }
}

@customElement("app-root")
class AppRoot extends LitElement {
  static styles = css`
    :host {
      display: grid;
      grid-template-columns: 40% 5px minmax(0, 1fr);
      height: 100vh;
      overflow: hidden;
    }
    .gutter {
      background: linear-gradient(to right, #dcdee2, #bfd8ee);
    }
  `;

  render() {
    return html`<scenario-map></scenario-map>
      <div class="gutter"></div>
      <scenario-editor></scenario-editor>`;
  }
}
